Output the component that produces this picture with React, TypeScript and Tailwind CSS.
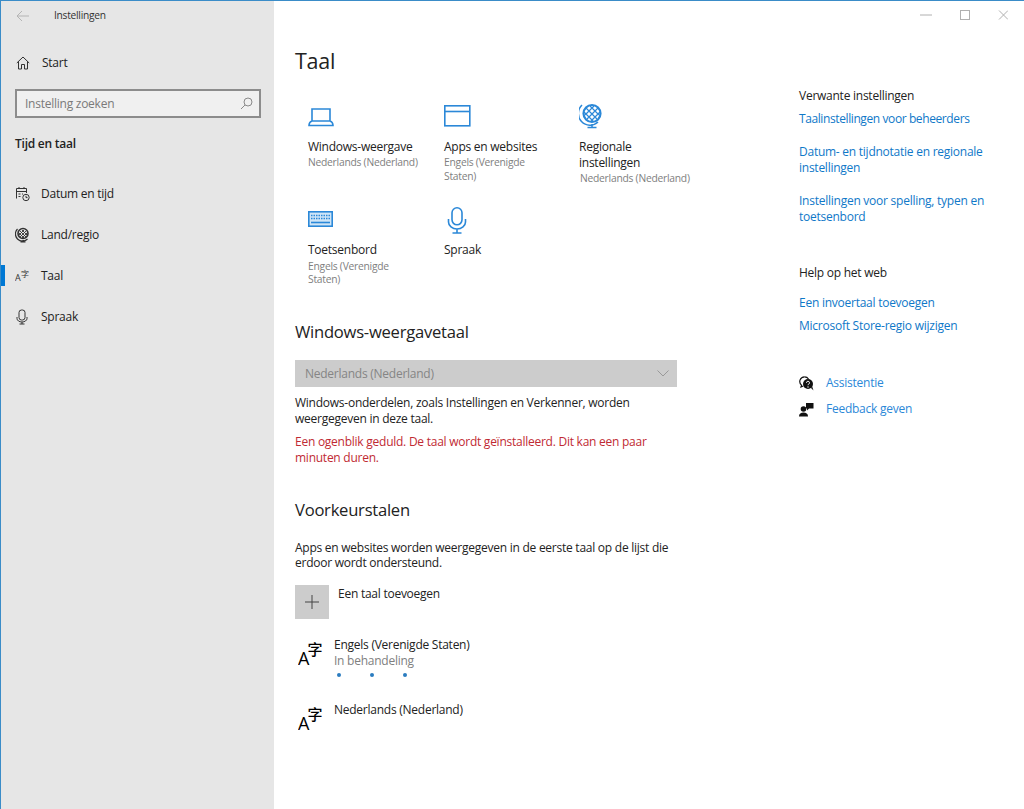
import React from "react";

const font = { fontFamily: '"Open Sans", "Noto Sans CJK SC", sans-serif' };

function SideIcon({ children }: { children: React.ReactNode }) {
  return (
    <svg width="16" height="16" viewBox="0 0 16 16" fill="none" stroke="#333" strokeWidth="1" className="shrink-0">
      {children}
    </svg>
  );
}

function Glyph({ small }: { small?: boolean }) {
  if (small) {
    return (
      <svg width="16" height="18" viewBox="0 0 16 18" className="shrink-0 -mb-[2px]" fill="#333">
        <text x="0" y="13" fontSize="9">A</text>
        <text x="6" y="9" fontSize="8">字</text>
      </svg>
    );
  }
  return (
    <svg width="26" height="36" viewBox="0 0 26 36" className="shrink-0 -mb-[8px]" fill="#000">
      <text x="0" y="27" fontSize="18">A</text>
      <text x="9.500" y="17" fontSize="15" fontWeight="500">字</text>
    </svg>
  );
}

function SideItem({ icon, label, active }: { icon: React.ReactNode; label: string; active?: boolean }) {
  return (
    <div className="relative flex items-center h-[41px] pl-[14px] gap-[10px]">
      {active && <div className="absolute left-0 top-[10px] w-1 h-[21px] bg-[#0078d4]" />}
      {icon}
      <span className="text-[12px] text-[#222]">{label}</span>
    </div>
  );
}

function Tile({ icon, name, sub, w, subClass }: { icon: React.ReactNode; name: React.ReactNode; sub?: React.ReactNode; w: string; subClass?: string }) {
  return (
    <div className={w}>
      <div className="h-[32px] flex items-start">{icon}</div>
      <div className="mt-[1px] text-[12px] leading-[16px] text-[#222]">{name}</div>
      {sub && <div className={"text-[10.3px] leading-[13.5px] text-[#808080] " + (subClass ?? "mt-[1px]")}>{sub}</div>}
    </div>
  );
}

const blue = "#2b88d8";

export default function App() {
  return (
    <div style={font} className="w-[1024px] h-[809px] flex overflow-hidden bg-white border-t border-l border-[#3a8cc8] tracking-[-0.25px]">
      <aside className="w-[273px] shrink-0 bg-[#e6e6e6] flex flex-col">
        <div className="h-[29px] flex items-center pl-[15px]">
          <svg width="14" height="12" viewBox="0 0 14 12" fill="none" stroke="#b4b4b4" strokeWidth="1">
            <path d="M13 6H1M6 1 1 6l5 5" />
          </svg>
          <span className="ml-[24px] text-[10.2px] text-[#333]">Instellingen</span>
        </div>
        <div className="h-[42px] mt-[12px] flex items-center pl-[15px] gap-[12px]">
          <svg width="14" height="14" viewBox="0 0 14 14" fill="none" stroke="#333" strokeWidth="1">
            <path d="M.8 7 7 1l6.2 6M2.500 5.500V13h3V8.500h3V13h3V5.500" />
          </svg>
          <span className="text-[12px] text-[#222]">Start</span>
        </div>
        <div className="mt-[5px] ml-[14px] w-[246px] h-[29px] border-2 border-[#8c8c8c] bg-[#f0f0f0] flex items-center justify-between pl-[8px] pr-[6px]">
          <span className="text-[12px] text-[#7a7a7a]">Instelling zoeken</span>
          <svg width="13" height="13" viewBox="0 0 13 13" fill="none" stroke="#8a8a8a" strokeWidth="1">
            <circle cx="8" cy="5" r="4" />
            <path d="M5 8l-4 4" />
          </svg>
        </div>
        <div className="mt-[17px] pl-[14px] text-[12px] leading-[18px] font-semibold text-[#222]">Tijd en taal</div>
        <div className="mt-[20px] flex flex-col">
          <SideItem
            label="Datum en tijd"
            icon={
              <SideIcon>
                <path d="M1.500 12.500V2.500h10V7M1.500 5.500h10M4 1v2M9 1v2M3.500 8h2M3.500 10.500h2M7 8h1" />
                <circle cx="11" cy="11.500" r="3.200" />
                <path d="M11 9.800v1.800h1.500" />
              </SideIcon>
            }
          />
          <SideItem
            label="Land/regio"
            icon={
              <SideIcon>
                <circle cx="8" cy="6.500" r="5" strokeWidth="1.600" />
                <path d="M5 4l6 6M7 3l5 5M4 6l5 5M11 4l-6 6M9 3 4 8M12 6l-5 5" strokeWidth=".9" />
                <path d="M2.500 2a7 7 0 0 0 10 10M8 13v2M5.500 15h5" strokeWidth="1.200" />
              </SideIcon>
            }
          />
          <SideItem label="Taal" active icon={<Glyph small />} />
          <SideItem
            label="Spraak"
            icon={
              <SideIcon>
                <rect x="4" y="1" width="6" height="10" rx="2.500" />
                <path d="M2 8v1.500a5 3.500 0 0 0 10 0V8M7 13v2M4.500 15h5" />
              </SideIcon>
            }
          />
        </div>
      </aside>

      <main className="flex-1 flex relative">
        <div className="absolute top-0 right-0 h-[28px] flex items-center">
          <svg width="88" height="12" viewBox="0 0 88 12" fill="none" stroke="#b0b0b0" strokeWidth="1">
            <path d="M0 6h12" />
            <rect x="40.500" y="1.500" width="9" height="9" />
            <path d="M79 1.500l9 9M88 1.500l-9 9" />
          </svg>
          <div className="w-[16px]" />
        </div>

        <div className="w-[525px] shrink-0 pl-[21px]">
          <h1 className="mt-[44px] text-[21.5px] leading-[32px] text-[#222]">Taal</h1>

          <div className="mt-[29px] pl-[13px] flex">
            <Tile
              w="w-[136px]"
              name="Windows-weergave"
              sub="Nederlands (Nederland)"
              icon={
                <svg width="26" height="20" viewBox="0 0 26 20" fill="none" stroke={blue} strokeWidth="1.600" className="mt-[1px]">
                  <path d="M4 14V2h18v12M1 18.500c0-2 1.500-4 3-4.500h18c1.500.5 3 2.500 3 4.500z" />
                </svg>
              }
            />
            <Tile
              w="w-[135px]"
              name="Apps en websites"
              sub={<>Engels (Verenigde<br />Staten)</>}
              icon={
                <svg width="27" height="22" viewBox="0 0 27 22" fill="none" stroke={blue} strokeWidth="1.600" className="-mt-[1px]">
                  <rect x=".8" y=".8" width="25" height="20" />
                  <path d="M1 6.500h25" />
                </svg>
              }
            />
            <Tile
              w="w-[125px]"
              name={<>Regionale<br />instellingen</>}
              sub={<span className="pl-[1px]">Nederlands (Nederland)</span>}
              icon={
                <svg width="26" height="26" viewBox="0 0 26 26" fill="none" stroke={blue} strokeWidth="1.200" className="-mt-[3px]">
                  <circle cx="13" cy="10.500" r="8.500" strokeWidth="2.200" />
                  <path d="M7 5l11 11M11 3l9 9M5 9l9 9M19 5 8 16M15 3l-9 9M21 9l-9 9" />
                  <path d="M3 2a11.500 11.500 0 0 0 16 17M13 21v3.500M8.500 24.500h9" strokeWidth="1.500" />
                </svg>
              }
            />
          </div>

          <div className="mt-[23px] pl-[13px] flex">
            <Tile
              w="w-[136px]"
              name="Toetsenbord"
              subClass="mt-[2px]"
              sub={<>Engels (Verenigde<br />Staten)</>}
              icon={
                <svg width="25" height="16" viewBox="0 0 25 16" fill="none" className="mt-[2px]">
                  <rect x=".8" y=".8" width="23.400" height="14.400" stroke={blue} strokeWidth="1.600" fill="#cfe5f7" />
                  <path d="M3 4.500h19M3 7.500h19" stroke={blue} strokeWidth="1.500" strokeDasharray="1.500 1" />
                  <path d="M3 11.500h19" stroke={blue} strokeWidth="1.600" />
                </svg>
              }
            />
            <Tile
              w="w-[135px]"
              name="Spraak"
              icon={
                <svg width="20" height="27" viewBox="0 0 20 27" fill="none" stroke={blue} strokeWidth="1.600" className="-mt-[2px] ml-[3px]">
                  <rect x="5" y=".8" width="10" height="17" rx="5" />
                  <path d="M1.500 12v3a8.500 7 0 0 0 17 0v-3M10 22v4M5.500 26h9" />
                </svg>
              }
            />
          </div>

          <h2 className="mt-[33px] text-[16.6px] leading-[24px] text-[#222]">Windows-weergavetaal</h2>
          <div className="mt-[16px] w-[382px] h-[27px] bg-[#cccccc] flex items-center justify-between pl-[10px] pr-[8px]">
            <span className="text-[12px] text-[#858585] pt-[1px]">Nederlands (Nederland)</span>
            <svg width="12" height="7" viewBox="0 0 12 7" fill="none" stroke="#999" strokeWidth="1">
              <path d="M.5.5 6 6l5.500-5.500" />
            </svg>
          </div>
          <p className="mt-[8px] whitespace-nowrap text-[12px] leading-[16px] text-[#222]">
            Windows-onderdelen, zoals Instellingen en Verkenner, worden<br />weergegeven in deze taal.
          </p>
          <p className="mt-[7px] whitespace-nowrap text-[12px] leading-[16px] text-[#bf2a33]">
            Een ogenblik geduld. De taal wordt geïnstalleerd. Dit kan een paar<br />minuten duren.
          </p>

          <h2 className="mt-[32px] text-[16.6px] leading-[24px] text-[#222]">Voorkeurstalen</h2>
          <p className="mt-[18px] whitespace-nowrap text-[12px] leading-[15px] text-[#222]">
            Apps en websites worden weergegeven in de eerste taal op de lijst die<br />erdoor wordt ondersteund.
          </p>

          <div className="mt-[15px] flex gap-[9px]">
            <div className="w-[34px] h-[34px] bg-[#cccccc] flex items-center justify-center">
              <svg width="14" height="14" viewBox="0 0 14 14" fill="none" stroke="#444" strokeWidth="1">
                <path d="M7 0v14M0 7h14" />
              </svg>
            </div>
            <span className="text-[12px] leading-[18px] text-[#222]">Een taal toevoegen</span>
          </div>

          <div className="mt-[19px] pl-[3px] flex gap-[10px]">
            <Glyph />
            <div>
              <div className="text-[12px] leading-[16px] text-[#222] -mt-[1px]">Engels (Verenigde Staten)</div>
              <div className="text-[12px] leading-[16px] text-[#808080]">In behandeling</div>
              <div className="mt-[4px] flex pl-[3px] gap-[29px]">
                <div className="w-[4px] h-[4px] rounded-full bg-[#2b7cc0]" />
                <div className="w-[4px] h-[4px] rounded-full bg-[#2b7cc0]" />
                <div className="w-[4px] h-[4px] rounded-full bg-[#2b7cc0]" />
              </div>
            </div>
          </div>

          <div className="mt-[26px] pl-[3px] flex gap-[10px]">
            <Glyph />
            <div className="text-[12px] leading-[16px] text-[#222] -mt-[1px]">Nederlands (Nederland)</div>
          </div>
        </div>

        <div className="pt-[87px] w-[190px] text-[12px] leading-[16px]">
          <div className="text-[#222]">Verwante instellingen</div>
          <div className="mt-[7px] text-[#0f78c8] whitespace-nowrap tracking-[-0.4px]">Taalinstellingen voor beheerders</div>
          <div className="mt-[17px] text-[#0f78c8] whitespace-nowrap">Datum- en tijdnotatie en regionale<br />instellingen</div>
          <div className="mt-[17px] text-[#0f78c8] whitespace-nowrap">Instellingen voor spelling, typen en<br />toetsenbord</div>
          <div className="mt-[40px] text-[#222]">Help op het web</div>
          <div className="mt-[14px] text-[#0f78c8]">Een invoertaal toevoegen</div>
          <div className="mt-[7px] text-[#0f78c8] whitespace-nowrap">Microsoft Store-regio wijzigen</div>
          <div className="mt-[41px] flex items-center gap-[12px]">
            <svg width="15" height="15" viewBox="0 0 15 15" className="shrink-0">
              <path d="M5.500 .8a4.700 4.700 0 0 0-3 8.300L2 11l2.300-1" fill="none" stroke="#111" strokeWidth="1.200" />
              <path d="M5.500 .8a4.700 4.700 0 0 1 4 2.200" fill="none" stroke="#111" strokeWidth="1.200" />
              <circle cx="9" cy="8" r="5" fill="#111" />
              <path d="M12 12l2.500 2.500L13 10z" fill="#111" />
              <path d="M7.500 6.800a1.500 1.500 0 1 1 2 1.400c-.4.200-.5.500-.5 1" stroke="#fff" strokeWidth="1" fill="none" />
              <circle cx="9" cy="11" r=".7" fill="#fff" />
            </svg>
            <span className="text-[#2b88d8]">Assistentie</span>
          </div>
          <div className="mt-[10px] flex items-center gap-[12px]">
            <svg width="15" height="15" viewBox="0 0 15 15" className="shrink-0">
              <circle cx="4.500" cy="7" r="2.800" fill="#111" />
              <path d="M0 14.500c0-3 2-4 4.500-4s4.500 1 4.500 4z" fill="#111" />
              <path d="M7 1h7.500v5.500H10l-2 2V6.500H7z" fill="#111" />
            </svg>
            <span className="text-[#2b88d8]">Feedback geven</span>
          </div>
        </div>
      </main>
    </div>
  );
}
